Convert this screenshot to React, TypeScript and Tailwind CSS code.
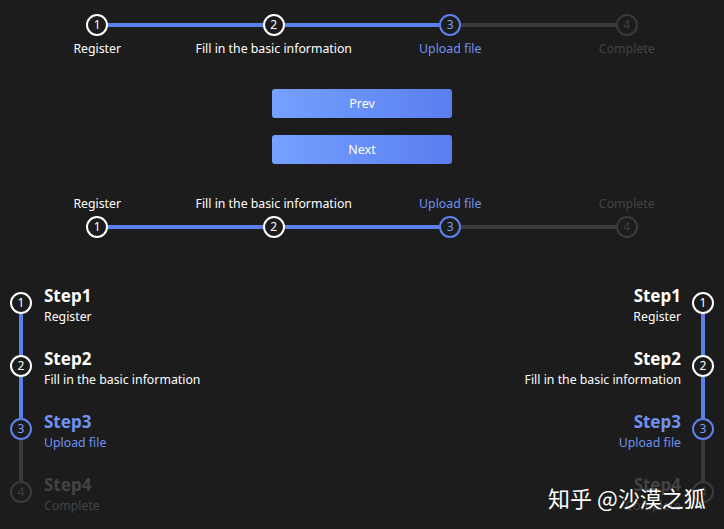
import React from "react";

const STEPS = [
  { title: "Step1", label: "Register" },
  { title: "Step2", label: "Fill in the basic information" },
  { title: "Step3", label: "Upload file" },
  { title: "Step4", label: "Complete" },
];

const ACTIVE = 3;
const FONT = { fontFamily: '"Noto Sans", "Open Sans", sans-serif' };

function status(n: number) {
  if (n < ACTIVE) return "done";
  if (n === ACTIVE) return "active";
  return "wait";
}

function Dot({ n }: { n: number }) {
  const s = status(n);
  const cls =
    s === "done"
      ? "border-white text-white"
      : s === "active"
        ? "border-[#5d82ee] text-[#7c9cf5]"
        : "border-[#3a3a3a] text-[#3f3f3f]";
  return (
    <div
      className={`flex h-[22px] w-[22px] shrink-0 items-center justify-center rounded-full border-2 bg-[#1c1c1c] text-[12px] leading-none ${cls}`}
    >
      {n}
    </div>
  );
}

function labelColor(n: number) {
  const s = status(n);
  if (s === "active") return "text-[#6f92f3]";
  if (s === "wait") return "text-[#434343]";
  return "text-white";
}

function HLine({ on, hidden }: { on: boolean; hidden?: boolean }) {
  return (
    <div
      className={`h-[4px] flex-1 ${hidden ? "bg-transparent" : on ? "bg-[#5b80ee]" : "bg-[#3a3a3a]"}`}
    />
  );
}

function Horizontal({ labelTop }: { labelTop?: boolean }) {
  return (
    <div className="flex px-[9px]">
      {STEPS.map((s, i) => {
        const n = i + 1;
        const label = (
          <div className={`text-[12.3px] leading-[18px] ${labelColor(n)}`}>{s.label}</div>
        );
        return (
          <div key={n} className="flex flex-1 flex-col items-center gap-[4px]">
            {labelTop && label}
            <div className={`flex w-full items-center ${labelTop ? "-mt-[1px]" : ""}`}>
              <HLine on={n <= ACTIVE} hidden={i === 0} />
              <Dot n={n} />
              <HLine on={n < ACTIVE} hidden={i === STEPS.length - 1} />
            </div>
            {!labelTop && label}
          </div>
        );
      })}
    </div>
  );
}

function Vertical({ right }: { right?: boolean }) {
  return (
    <div className="flex flex-col">
      {STEPS.map((s, i) => {
        const n = i + 1;
        const color = labelColor(n);
        return (
          <div key={n} className={`flex h-[63px] ${right ? "flex-row-reverse" : ""}`}>
            <div className="flex w-[22px] flex-col items-center">
              <Dot n={n} />
              {i < STEPS.length - 1 && (
                <div className={`w-[4px] flex-1 ${n < ACTIVE ? "bg-[#5b80ee]" : "bg-[#3a3a3a]"}`} />
              )}
            </div>
            <div className={`flex flex-col ${right ? "mr-[11px] items-end" : "ml-[12px]"} -mt-[7px]`}>
              <div className={`text-[17px] font-bold leading-[22px] ${color}`}>{s.title}</div>
              <div className={`mt-[1px] text-[12.3px] leading-[18px] ${color}`}>{s.label}</div>
            </div>
          </div>
        );
      })}
    </div>
  );
}

export default function App() {
  return (
    <div className="relative h-[529px] w-full overflow-hidden bg-[#1c1c1c]" style={FONT}>
      <div className="pt-[14px]">
        <Horizontal />
      </div>

      <div className="mt-[31px] flex flex-col items-center gap-[17px]">
        {["Prev", "Next"].map((t) => (
          <button
            key={t}
            className="h-[29px] w-[180px] rounded-[3px] bg-gradient-to-r from-[#75a1ff] to-[#5a7ef0] pt-[1px] text-[12.5px] text-white"
          >
            {t}
          </button>
        ))}
      </div>

      <div className="mt-[31px]">
        <Horizontal labelTop />
      </div>

      <div className="mt-[54px] flex justify-between px-[10px]">
        <Vertical />
        <Vertical right />
      </div>

      <div
        className="absolute left-[548px] top-[482px] text-[22px] leading-[30px] text-white"
        style={{ fontFamily: '"Noto Sans CJK SC", "Noto Sans", sans-serif' }}
      >
        知乎 @沙漠之狐
      </div>
    </div>
  );
}
